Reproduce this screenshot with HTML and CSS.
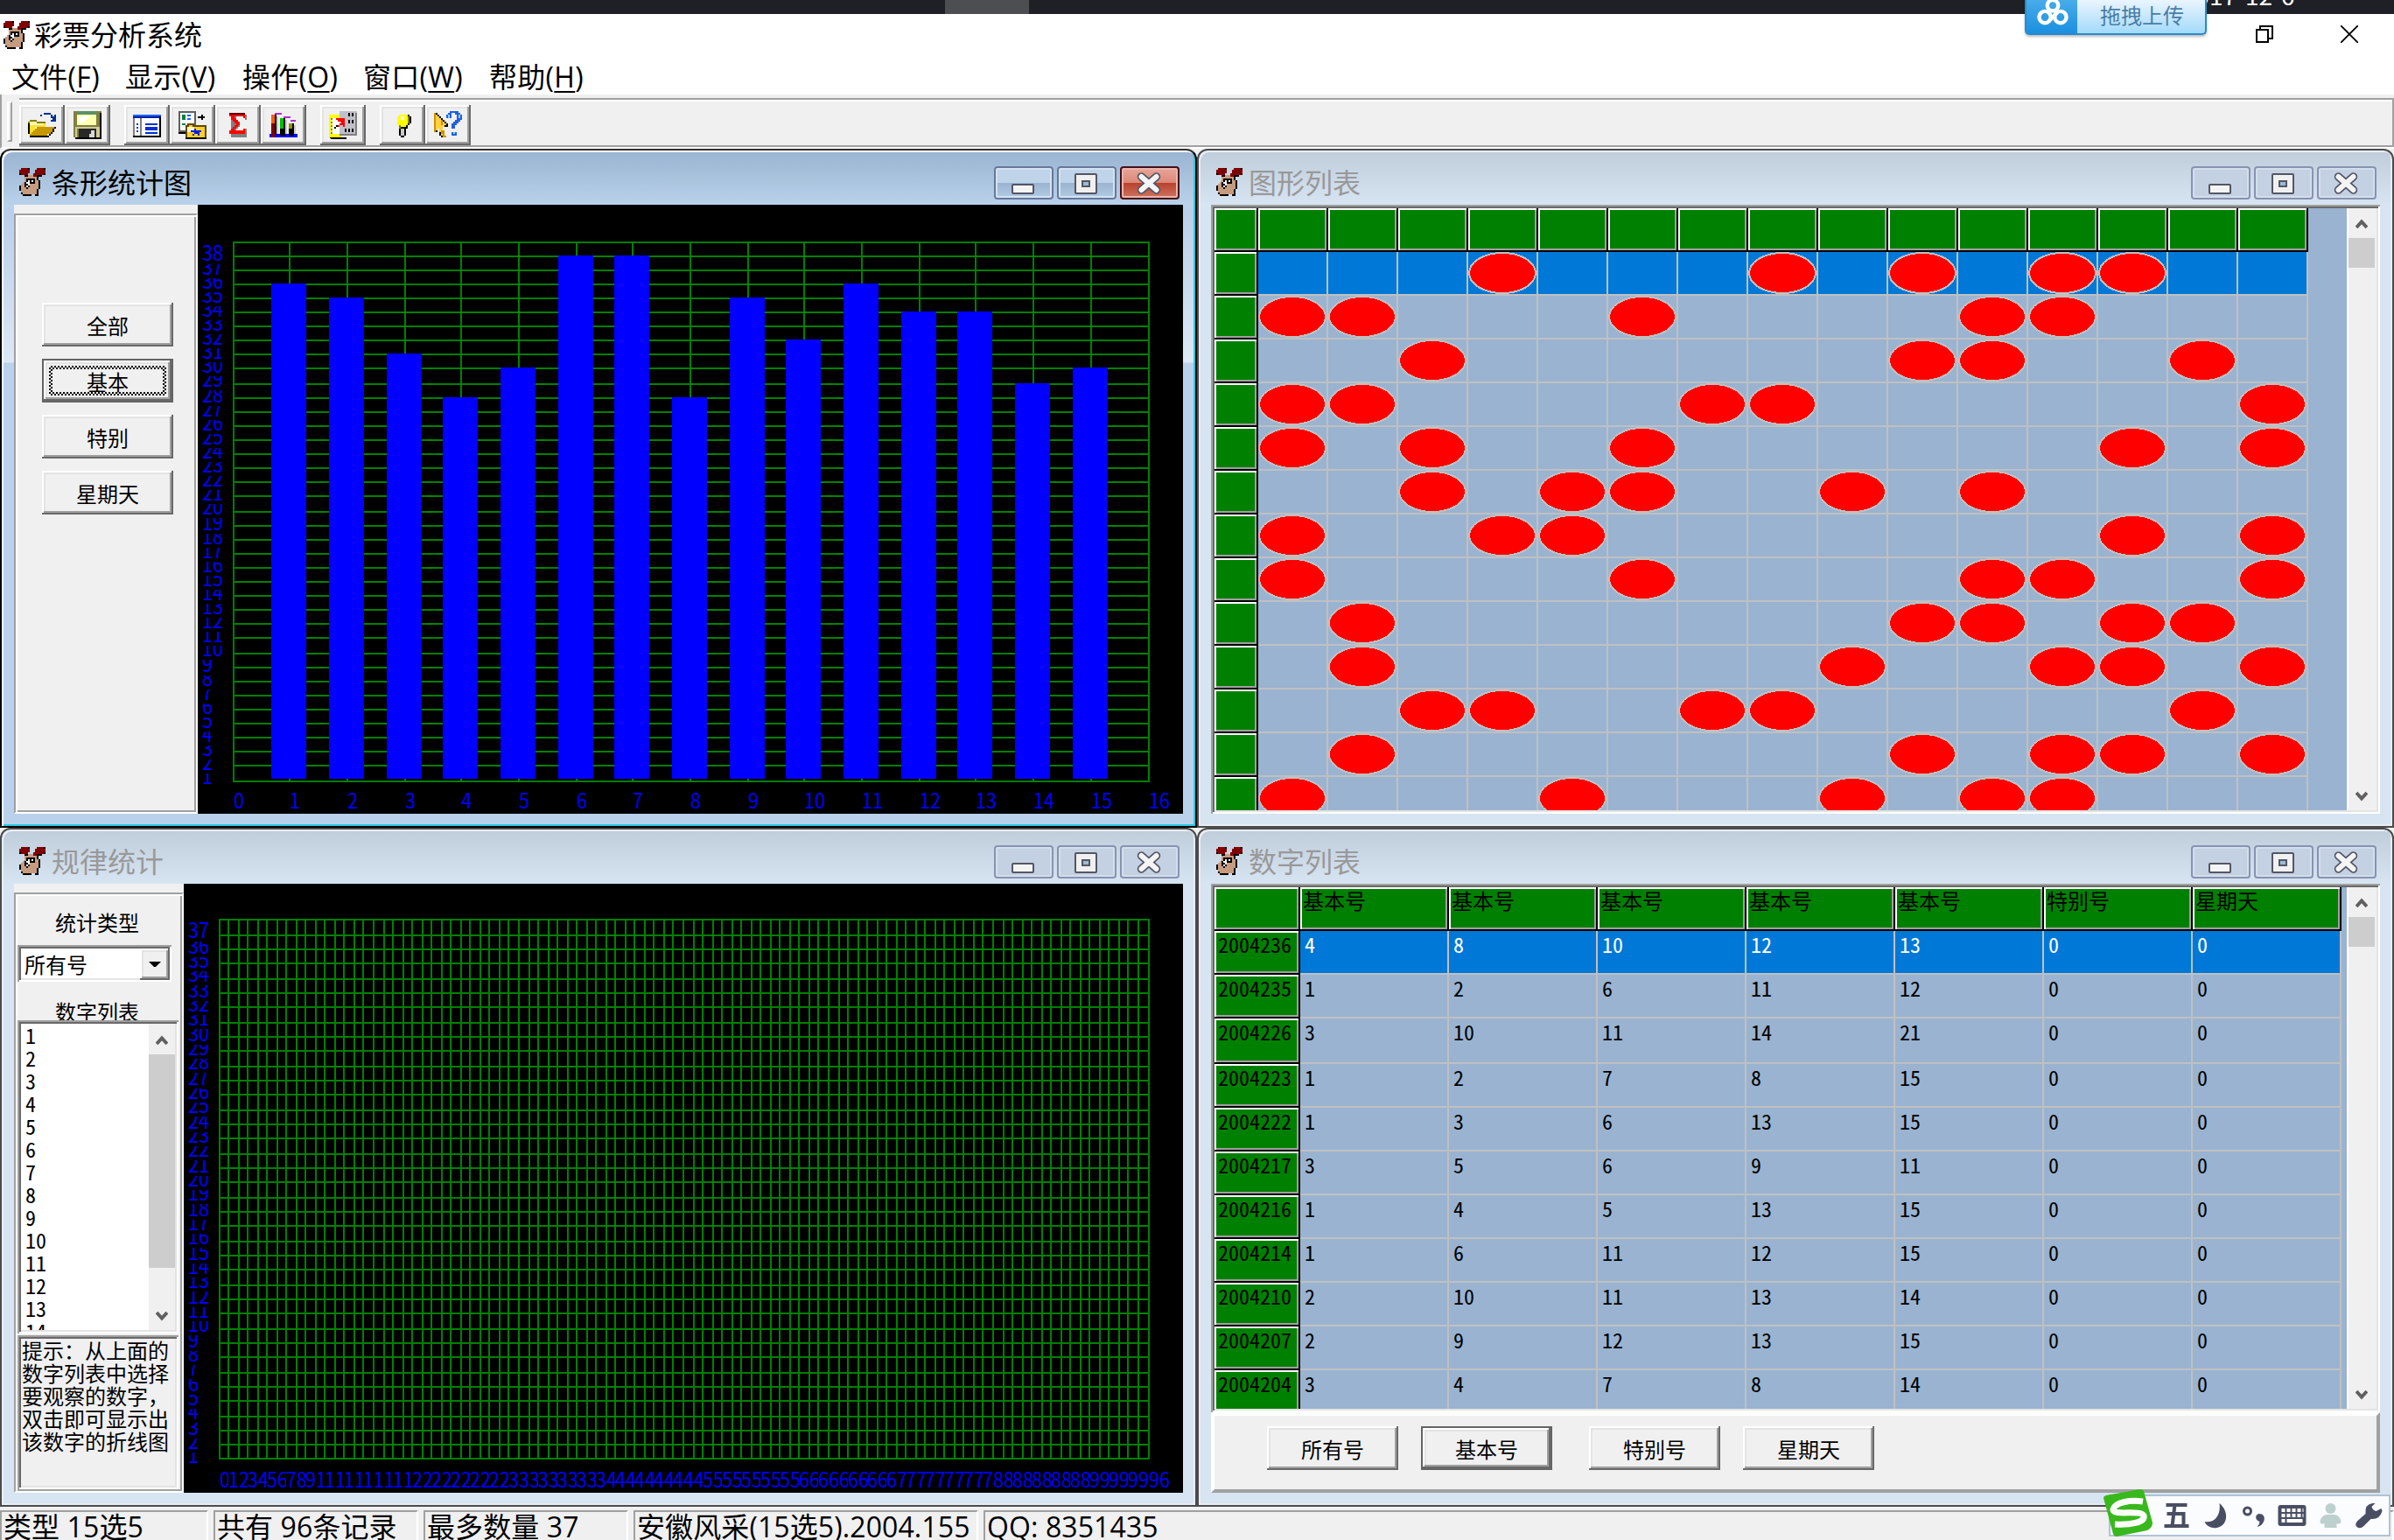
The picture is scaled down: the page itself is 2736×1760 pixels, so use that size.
FILE: index.html
```html
<!DOCTYPE html>
<html lang="zh-CN">
<head>
<meta charset="utf-8">
<title>彩票分析系统</title>
<link rel="stylesheet" href="styles.css">
</head>
<body>
<svg class="defs" width="0" height="0">
  <symbol id="moose" viewBox="0 0 15 16">
    <path fill="#c69c80" d="M3 4h6v1h1v2h1v5h-1v3H2v-1H1V9h1V8h1z"/>
    <path fill="#800000" d="M1 0h4v1h1v2H5v1H0V1h1zM10 0h4v1h1v2h-1v1h-4v1H8V3h1V1h1z"/>
    <path fill="#000" d="M5 0h1v1H5zM0 3h1v1H0zM14 0h1v1h-1zM14 3h1v1h-1zM3 4h2v1H3zM10 4h3v1h-3zM10 5h1v2h-1zM11 7h1v5h-1zM10 12h1v4h-1zM2 15h5v1H2zM9 15h1v1H9zM1 14h1v1H1zM0 10h1v3H0zM4 6h5v1H4zM8 7h1v2H8zM4 7h1v1H4zM6 8h2v1H6zM3 8h1v3H3zM4 11h1v1H4zM5 10h1v1H5z"/>
    <path fill="#fff" d="M5 7h3v1H5zM4 8h2v2H4zM4 10h1v1H4z"/>
    <path fill="#000" d="M6 7h1v1H6zM4 9h1v1H4z"/>
  </symbol>
  <symbol id="g-min" viewBox="0 0 68 38"><rect x="21" y="21" width="24" height="10" rx="1" fill="#f4f4f4" stroke="#535666" stroke-width="2"/></symbol>
  <symbol id="g-max" viewBox="0 0 68 38"><rect x="21" y="9" width="24" height="22" rx="1" fill="#f0f0f0" stroke="#535666" stroke-width="2"/><rect x="29" y="17" width="8" height="6" fill="#9fb9d3" stroke="#535666" stroke-width="2"/></symbol>
  <symbol id="g-close" viewBox="0 0 68 38"><path d="M24.500 12L41.500 27M41.500 12L24.500 27" stroke="#535666" stroke-width="9.500" stroke-linecap="round"/><path d="M24.500 12L41.500 27M41.500 12L24.500 27" stroke="#f4f4f4" stroke-width="6" stroke-linecap="round"/></symbol>
  <symbol id="up" viewBox="0 0 14 12"><path d="M1 10L7 3.500L13 10" fill="none" stroke="#606060" stroke-width="4"/></symbol>
  <symbol id="down" viewBox="0 0 14 12"><path d="M1 2L7 8.500L13 2" fill="none" stroke="#606060" stroke-width="4"/></symbol>
</svg>

<div class="behind"><i class="behind-tab"></i><span class="behind-date">2017-12-6</span></div>

<header class="titlebar">
  <svg class="moose"><use href="#moose"/></svg>
  <h1>彩票分析系统</h1>
  <svg class="sys restore" viewBox="0 0 20 20"><path d="M1 5h13v14H1zM5 5V1h14v14h-5" fill="none" stroke="#000" stroke-width="2"/></svg>
  <svg class="sys close" viewBox="0 0 20 20"><path d="M0 0L20 20M20 0L0 20" stroke="#000" stroke-width="1.800"/></svg>
</header>
<nav class="menu">
  <span>文件(<u>F</u>)</span><span>显示(<u>V</u>)</span><span>操作(<u>O</u>)</span><span>窗口(<u>W</u>)</span><span>帮助(<u>H</u>)</span>
</nav>

<div class="toolbar">
  <i class="grip"></i>
  <div class="tools">
    <button class="tool"><svg viewBox="0 0 16 16"><path fill="#003090" d="M9 1h4v1H9zM7 2h1v1H7zM13 2h1v1h1V2h1v4h-3V5h1V4h-1z"/><path fill="#808000" d="M0 6h1V5h4v1h5v3H0z"/><path fill="#ffe030" d="M1 7h9v2H4v3H3v1H1z"/><path fill="#fff8b0" d="M1 6h4v1h4v1H1z"/><path fill="#c89800" d="M5 9h10v1h-1v2h-1v1h-2v1H1v-1h1v-1h1v-1h1v-1h1z"/><path fill="#000" d="M0 7h1v6H0zM1 14h11v1H1zM15 9h1v1h-1zM14 10h1v2h-1zM13 12h1v1h-1zM12 13h1v1h-1z"/></svg></button>
    <button class="tool"><svg viewBox="0 0 16 16"><path fill="#808040" d="M0 0h16v16H1v-1H0z"/><path fill="#5a9068" d="M2 0h11v2H2z"/><path fill="#ffffb0" d="M2 2h11v6H2z"/><path fill="#fff" d="M3 3h6v1H8v1H7v1H5v1H3z"/><path fill="#d0cc98" d="M1 9h14v1H1zM1 10h1v5H1zM13 10h2v5h-2z"/><path fill="#282828" d="M3 10h10v5H3z"/><path fill="#d8d8d8" d="M10 11h2v4H9v-2h1z"/><path fill="#000" d="M15 1h1v15H1v-1h14z"/></svg></button>
    <i class="gap"></i>
    <button class="tool"><svg viewBox="0 0 16 16"><path fill="#808080" d="M0 2h1v13H0zM4 4h1v11H4z"/><path fill="#fff" d="M1 4h3v10H1zM5 4h10v10H5z"/><path fill="#2060ff" d="M0 2h16v1H0z"/><path fill="#0020a0" d="M0 3h16v1H0z"/><path fill="#0030d0" d="M2 7h1v1H2zM2 9h1v1H2zM2 11h1v1H2zM7 7h7v1H7zM7 9h7v2H7zM7 12h7v1H7z"/><path fill="#000" d="M15 3h1v12H0v-1h15z"/></svg></button>
    <button class="tool"><svg viewBox="0 0 16 16"><path fill="#fff" stroke="#606060" d="M.5.500h9v11h-9z"/><path fill="#008040" d="M2 2h2v3H2zM2 7h2v1H2z"/><path fill="#2060ff" d="M5 2h2v1H5zM5 4h2v1H5z"/><path fill="#000" d="M13 2h1v3h-1zM11 3h4v1h-4zM0 12h4v1H0z"/><path fill="#ffd028" stroke="#604800" d="M4.500 8.500h1v-1h3v1h7v7h-11z"/><path fill="#fff8c0" d="M5 9h4v3H5z"/><path fill="#0020e0" d="M9 10h1v1h3v1h-1v2h-1v-1h-2v1H8v-1h1v-1H7v-1h2z"/><path d="M4 15h12v1H4z"/></svg></button>
    <button class="tool"><svg viewBox="0 0 16 16"><path fill="#808080" d="M4 2h9v3h-1V3H7v2h1v1h1v3H8v1H7v2h4v-2h2v5H4z"/><path fill="#f00" d="M3 1h9v3h-1V3H6v1h1v1h1v1h1v2H8v1H7v1H6v1h5v-1h1v3H3v-2h1v-1h1V9h1V8h1V7H6V6H5V5H4V3H3z"/><path fill="#600000" d="M3 1h9v1H3z"/></svg></button>
    <button class="tool"><svg viewBox="0 0 16 16"><path fill="#ff6000" d="M1 2h2v5H1z"/><path fill="#800000" d="M1 7h2v7H1z"/><path fill="#00c000" d="M6 4h2v6H6z"/><path fill="#909000" d="M11 7h2v3h-2z"/><path fill="#000" d="M3 2h1v11H3zM6 10h3v3H6zM8 4h1v6H8zM11 10h3v3h-3zM13 7h1v3h-1z"/><path fill="#b030d0" d="M3 1h4v1H3zM8 3h4v1H8zM12 5h3v1h-3z"/><path fill="#ccc" d="M4 3h1v10H4zM9 5h1v8H9zM14 8h1v5h-1z"/><path fill="#00f" d="M0 13h16v2H0z"/><path fill="#800000" d="M1 13h2v2H1z"/><path d="M6 13h3v1H6zM11 13h3v1h-3z"/></svg></button>
    <i class="gap"></i>
    <button class="tool"><svg viewBox="0 0 16 16"><path fill="#ffff00" d="M0 2h7v13H0z"/><path fill="#808080" d="M1 4h1v1H1zM1 6h1v1H1zM1 8h1v1H1zM1 10h1v1H1zM1 12h1v1H1z"/><path fill="#fff" d="M2 4h4v9H2z"/><path fill="#c0c0c8" d="M6 0h10v13H6z"/><path fill="#808080" d="M15 1h1v13H6v-1h9z"/><path d="M11 1h1v2h-1zM13 1h1v2h-1zM11 5h1v2h-1zM13 5h1v2h-1zM9 10h1v2H9zM11 10h1v2h-1zM13 10h1v2h-1zM0 15h10v1H1zM3 9h1V8h1v1H4v1H3z"/><path fill="#f00" d="M4 4h5v5H8V8H6v1H5V8h1V7h1V6H5V5H4z"/></svg></button>
    <i class="gap"></i>
    <button class="tool"><svg viewBox="0 0 16 16"><path fill="#808000" d="M6 2h5v1h1v5h-1v2H6V8H5V3h1z"/><path fill="#ff0" d="M5 3h1V2h5v6h-1v2H7V8H5z"/><path fill="#fff" d="M7 3h2v2H7z"/><path fill="#b0b0b0" d="M7 10h2v4H7z"/><path d="M11 2h1v1h1v4h-1v1h-1v2h-1v4H9v1H7v-1H6v-4h1v-1h3V8h1V7h1V3h-1z"/><path fill="#c8c8c8" d="M7 10h2v4H7z"/></svg></button>
    <button class="tool"><svg viewBox="0 0 16 16"><path fill="#ffd040" d="M0 1h1v1h1v1h1v1h1v1h1v1h1v1h2v2H5v2h1v3H4v-2H3v-2H2v1H1v1H0z"/><path fill="#d09000" d="M0 1h1v11H0zM4 5h1v3H4zM5 11h1v3h1v1H5v-2H4v-2z"/><path fill="#000" d="M1 1h1v1H1zM2 2h1v1H2zM3 3h1v1H3zM4 4h1v1H4zM5 5h1v1H5zM6 6h1v1H6zM7 7h1v2H6V8h1zM1 11h1v1H1zM3 12h1v2H3zM4 14h1v1H4z"/><path fill="#2060e0" d="M9 0h5v1h1v1h1v3h-1v1h-1v1h-1v1h-1v2h-2V7h1V6h1V5h1V2h-1V1h-2v3H7V2h1V1h1zM10 12h3v2h-3z"/><path fill="#90d0ff" d="M8 2h1v2H8zM14 2h1v2h-1zM11 12h1v1h-1z"/></svg></button>
  </div>
</div>

<main class="mdi">
  <section class="win active">
    <div class="caption"><svg class="moose"><use href="#moose"/></svg><h2>条形统计图</h2><div class="capbtns"><svg><use href="#g-min"/></svg><svg><use href="#g-max"/></svg><svg class="x"><use href="#g-close"/></svg></div></div>
    <div class="client row">
      <div class="side bars-side">
        <div class="etched stack">
          <button class="btn">全部</button>
          <button class="btn default"><span class="focus"><span>基本</span></span></button>
          <button class="btn">特别</button>
          <button class="btn">星期天</button>
        </div>
      </div>
      <svg id="bars" class="plot" width="1126" height="696"></svg>
    </div>
  </section>

  <section class="win">
    <div class="caption"><svg class="moose"><use href="#moose"/></svg><h2>图形列表</h2><div class="capbtns"><svg><use href="#g-min"/></svg><svg><use href="#g-max"/></svg><svg><use href="#g-close"/></svg></div></div>
    <div class="client">
      <div class="gridbox full">
        <div class="gridview" id="balls"></div>
        <div class="scroll"><svg><use href="#up"/></svg><i></i><svg><use href="#down"/></svg></div>
      </div>
    </div>
  </section>

  <section class="win">
    <div class="caption"><svg class="moose"><use href="#moose"/></svg><h2>规律统计</h2><div class="capbtns"><svg><use href="#g-min"/></svg><svg><use href="#g-max"/></svg><svg><use href="#g-close"/></svg></div></div>
    <div class="client row">
      <div class="side rule-side">
        <div class="etched rule">
          <div class="lbl">统计类型</div>
          <div class="combo"><span>所有号</span><b><svg viewBox="0 0 14 8"><path d="M0 1h14L8 7H6z"/></svg></b></div>
          <div class="lbl second">数字列表</div>
          <div class="list">
            <ul><li>1</li><li>2</li><li>3</li><li>4</li><li>5</li><li>6</li><li>7</li><li>8</li><li>9</li><li>10</li><li>11</li><li>12</li><li>13</li><li>14</li></ul>
            <div class="scroll listscroll"><svg><use href="#up"/></svg><i></i><svg><use href="#down"/></svg></div>
          </div>
          <div class="tip">提示：从上面的<br>数字列表中选择<br>要观察的数字，<br>双击即可显示出<br>该数字的折线图</div>
        </div>
      </div>
      <svg id="rule" class="plot" width="1142" height="696"></svg>
    </div>
  </section>

  <section class="win">
    <div class="caption"><svg class="moose"><use href="#moose"/></svg><h2>数字列表</h2><div class="capbtns"><svg><use href="#g-min"/></svg><svg><use href="#g-max"/></svg><svg><use href="#g-close"/></svg></div></div>
    <div class="client">
      <div class="gridbox part">
        <div class="gridview" id="nums"></div>
        <div class="scroll"><svg><use href="#up"/></svg><i></i><svg><use href="#down"/></svg></div>
      </div>
      <div class="panel"><button class="btn">所有号</button><button class="btn default">基本号</button><button class="btn">特别号</button><button class="btn">星期天</button></div>
    </div>
  </section>
</main>

<footer class="status"><span>类型 15选5</span><span>共有 96条记录</span><span>最多数量 37</span><span>安徽风采(15选5).2004.155</span><span>QQ: 8351435</span></footer>

<div class="upload">
  <div class="upload-logo"><svg viewBox="0 0 40 36" fill="none" stroke="#fff" stroke-width="5"><circle cx="20" cy="7" r="7"/><circle cx="10" cy="22" r="7.500"/><circle cx="30" cy="22" r="7.500"/><path d="M15 27L26 16"/></svg></div>
  <div class="upload-text">拖拽上传</div>
</div>

<div class="ime">
  <svg class="ime-s" viewBox="0 0 56 54"><path fill="#38b81c" d="M0 10Q0 8 3 7L42 0Q45 0 46 2L56 38Q56 44 50 47L15 54Q12 54 11 51Z"/><path fill="none" stroke="#fff" stroke-width="7" d="M45 14C30 12 13 15 11 23C10 31 42 23 46 30C48 38 30 41 13 40"/></svg>
  <svg class="ime-row" viewBox="0 0 256 44">
    <g fill="none" stroke="#494e63" stroke-width="4"><path d="M4 10h24M14 10L11 34M5 20h19v14M2 34h28"/></g>
    <path fill="#494e63" d="M65 8C77 18 74 34 62 36C56 37 50 34 48 29C59 31 67 22 65 8z"/>
    <circle cx="97" cy="17" r="4" fill="none" stroke="#494e63" stroke-width="3"/><path fill="#494e63" d="M110 20c6 0 8 5 5 10q-2 4-7 5q3-3 3-6c-5-1-6-8-1-9z"/>
    <rect x="132" y="10" width="32" height="24" rx="3" fill="#494e63"/><path stroke="#fff" stroke-width="4" stroke-dasharray="4 2" d="M136 16h25M136 22h25"/><path stroke="#fff" stroke-width="4" d="M136 28h4M142 28h18"/>
    <circle cx="192" cy="14" r="6" fill="#bcd0ce"/><path fill="#bcd0ce" d="M180 30c0-6 5-9 8-9h8c3 0 8 3 8 9q-3 3-5 1v5h-14v-5q-3 2-5-1z"/>
    <path fill="#494e63" d="M240 8q-9 1-8 12l-9 8q-4 4-1 7q4 3 8-1l8-8q10 1 13-9l-1-3l-6 3q-4-1-5-5l4-4z"/>
  </svg>
</div>
<script src="app.js"></script>
</body>
</html>
```
FILE: styles.css
```css
* { box-sizing: border-box; margin: 0; padding: 0; }
body {
  width: 2736px; height: 1760px; overflow: hidden; position: relative;
  display: flex; flex-direction: column;
  background: #f0f0f0; color: #000;
  font: 24px "Noto Sans CJK SC", sans-serif;
}
svg { display: block; flex: none; }
button { font: inherit; border: 0; background: #f0f0f0; flex: none; }
.defs { position: absolute; }
.moose { width: 30px; height: 32px; shape-rendering: crispEdges; }

.behind { height: 16px; flex: none; background: #1f2025; overflow: hidden; display: flex; }
.behind-tab { width: 96px; margin-left: 1080px; background: #4d4e52; }
.behind-date { margin-left: 1318px; color: #fff; font-size: 28px; line-height: 30px; height: 30px; margin-top: -21px; }

.titlebar { height: 50px; flex: none; background: #fff; display: flex; align-items: flex-start; padding: 8px 0 0 4px; }
.titlebar h1 { flex: 1; }
h1, h2 { font-weight: 400; font-size: 32px; line-height: 34px; white-space: nowrap; }
.titlebar h1 { margin-left: 5px; margin-top: -3px; }
.sys { width: 20px; height: 20px; margin-top: 5px; }
.restore { margin-right: 77px; }
.close { margin-right: 41px; }
.menu { height: 42px; flex: none; background: #fff; display: grid; grid-template-columns: 130px 134px 138px 144px 200px; padding-left: 13px; font: 32px/44px "Open Sans", "Noto Sans CJK SC", sans-serif; white-space: nowrap; letter-spacing: .3px; }
.menu u { text-decoration-thickness: 2px; text-underline-offset: 4px; }

.toolbar { height: 62px; flex: none; display: flex; padding-top: 4px; border-left: 2px solid #a0a0a0; border-bottom: 2px solid #fff; }
.grip { width: 6px; height: 46px; margin: 4px 8px 0 6px; border: 2px solid #fff; border-right-color: #a0a0a0; border-bottom-color: #a0a0a0; }
.tools { flex: 1; height: 56px; display: flex; padding-top: 6px; border-top: 2px solid #a0a0a0; border-bottom: 2px solid #a0a0a0; border-right: 2px solid #a0a0a0; box-shadow: inset 0 2px #fff; }
.tool { width: 52px; height: 46px; padding: 6px 10px; }
.tool svg { width: 32px; height: 32px; shape-rendering: crispEdges; }
.gap { width: 16px; }

.tool, .btn, .combo b { box-shadow: inset -2px -2px #696969, inset 2px 2px #fff, inset -4px -4px #a0a0a0, inset 4px 4px #e3e3e3; }
.btn { width: 150px; height: 50px; line-height: 51px; text-align: center; }
.btn.default { border: 2px solid #646464; line-height: 47px; }
.focus { display: block; height: 34px; margin: 6px; padding: 4px; background: repeating-conic-gradient(#000 0 25%, #f0f0f0 0 50%) 0 0 / 4px 4px; }
.focus span { display: block; height: 26px; line-height: 28px; background: #f0f0f0; }

.mdi { flex: none; display: grid; grid-template-columns: 1368px 1368px; grid-template-rows: 776px 776px; }
.win {
  border: 2px solid #4b4b4b; border-radius: 12px 12px 0 0; padding: 0 14px 14px;
  background: linear-gradient(#bfcddb, #d7e4f2 62px, #d7e4f2);
  box-shadow: inset 2px 2px #e8edf5, inset -2px -2px #e8edf5;
}
.win.active {
  border-color: #000; border-top-color: #303030;
  background: linear-gradient(#99b4d1, #b9d1ea 62px, #b9cfea 70px, #dce8f5 242px, #b9d1ea 243px);
  box-shadow: inset 2px 2px #fff, inset -2px -2px #29cbe0;
}
.caption { height: 62px; display: flex; align-items: flex-start; padding: 20px 4px 0 6px; }
.caption h2 { flex: 1; margin: -2px 0 0 7px; color: #999; }
.active h2 { color: #000; }
.capbtns { display: flex; gap: 4px; margin-top: -2px; }
.capbtns svg { width: 68px; height: 38px; border-radius: 4px; background: #c4d1e2; box-shadow: inset 0 0 0 2px #8893b1, inset 0 0 0 4px #d3deec; }
.active .capbtns svg { background: linear-gradient(#bfd3e9 50%, #9ab4d0 50%, #b5cde5); box-shadow: inset 0 0 0 2px #66789b, inset 0 0 0 4px #d4e2f1; }
.active .capbtns .x { background: linear-gradient(#e8a89c, #dc8878 50%, #b8412c 50%, #d07a66); box-shadow: inset 0 0 0 2px #43101c, inset 0 0 0 4px #eab5aa; }

.client { height: 696px; width: 1336px; background: #f0f0f0; overflow: hidden; }
.row { display: flex; }
.plot { background: #000; }
.plot path, .plot rect { shape-rendering: crispEdges; }
.plot text { font: 24px "Noto Sans CJK SC", sans-serif; fill: #00f; }
.side { padding-top: 10px; }
.bars-side { width: 210px; }
.rule-side { width: 194px; }
.etched { height: 686px; border: 2px solid #a0a0a0; border-right-color: #fff; border-bottom-color: #fff; box-shadow: inset 2px 2px #fff, inset -2px -2px #a0a0a0; }
.stack { padding: 100px 0 0 30px; display: flex; flex-direction: column; gap: 14px; }
.rule { padding: 16px 2px 0; }
.lbl { height: 42px; line-height: 32px; text-align: center; padding-right: 4px; }
.lbl.second { height: 44px; line-height: 67px; overflow: hidden; }
.combo { width: 176px; height: 42px; background: #fff; display: flex; justify-content: space-between; padding: 4px 2px 2px 8px; line-height: 36px; }
.combo, .list, .tip { box-shadow: inset 2px 2px #a0a0a0, inset -2px -2px #fff, inset 4px 4px #696969, inset -4px -4px #e3e3e3; }
.combo b { width: 34px; background: #f0f0f0; padding: 14px 10px; }
.combo b svg { width: 14px; height: 8px; }
.list { width: 184px; height: 358px; background: #fff; padding: 4px; display: flex; overflow: hidden; }
.list ul { list-style: none; flex: 1; line-height: 26px; padding: 0 0 0 5px; height: 350px; overflow: hidden; }
.list li, .num { font-feature-settings: "hwid"; }
.tip { width: 184px; height: 176px; margin-top: 2px; padding: 4px 0 0 5px; line-height: 26px; white-space: nowrap; }

.gridbox { display: flex; background: #99b3d1; padding: 4px; box-shadow: inset 2px 2px #a0a0a0, inset -2px -2px #fff, inset 4px 4px #696969, inset -4px -4px #e3e3e3; }
.full { height: 696px; }
.part { height: 604px; }
.gridview { flex: 1; overflow: hidden; }
.scroll { width: 34px; background: #f0f0f0; border-left: 2px solid #fff; display: flex; flex-direction: column; align-items: center; padding: 12px 2px 10px 0; }
.scroll svg { width: 14px; height: 12px; }
.scroll i { width: 30px; height: 34px; background: #cdcdcd; margin: 10px 0 auto; }
.scroll.listscroll { border: 0; width: 30px; padding: 13px 0 10px 0; }
.scroll.listscroll i { height: 244px; }

.gr { display: flex; height: 50px; }
.gr.tall { height: 52px; }
.gr > * { flex: none; width: 80px; border-right: 2px solid #c0c0c0; border-bottom: 2px solid #c0c0c0; line-height: 30px; white-space: nowrap; }
.gr .fix { background: #008000; border-color: #000; box-shadow: inset 2px 2px #fff, inset -2px -2px #a0a0a0; }
.gr .fix:first-child { width: 50px; }
.gr.sel > :not(.fix) { background: #0078d7; color: #fff; }
.nums .gr > * { width: 170px; padding-left: 5px; }
.nums .gr .fix { padding-left: 3px; }
.nums .gr .fix:first-child { width: 98px; padding-left: 4px; }
.ball { width: 78px; height: 48px; shape-rendering: crispEdges; }

.panel { height: 92px; border: 4px solid #fff; border-right-color: #a0a0a0; border-bottom-color: #a0a0a0; display: grid; grid-template-columns: 176px 192px 176px 150px; padding: 12px 0 0 60px; }

.status { height: 38px; flex: none; overflow: hidden; padding-top: 4px; display: grid; grid-template-columns: 238px 234px 234px 394px 1fr; gap: 6px; font: 32px/34px "Open Sans", "Noto Sans CJK SC", sans-serif; white-space: nowrap; }
.status span { border-top: 2px solid #a0a0a0; border-left: 2px solid #a0a0a0; border-right: 2px solid #fff; padding-left: 2px; letter-spacing: .1px; }

.upload { position: absolute; left: 2314px; top: 0; width: 208px; height: 40px; display: flex; border: 2px solid #2a8acb; border-top: 0; border-radius: 0 0 5px 5px; background: linear-gradient(#eaf5fe, #a2dafa); box-shadow: 0 2px 3px #0004; }
.upload-logo { width: 58px; background: linear-gradient(#48acea, #1a8fe0); padding-left: 10px; }
.upload-logo svg { width: 40px; height: 32px; }
.upload-text { padding-left: 26px; line-height: 34px; color: #4a7ea8; }

.ime { position: absolute; left: 2404px; top: 1702px; width: 328px; height: 56px; }
.ime-s { position: absolute; left: 0; top: 0; width: 56px; height: 54px; }
.ime-row { width: 322px; height: 48px; margin: 6px 0 0 6px; padding-left: 57px; background: #fafcfe; border: 2px solid #b0c3d5; }
```
FILE: app.js
```js
const EPS = 1e-6;
const label = (text, x, base) => {
  const w = 12 * String(text).length;
  return `<rect x="${x}" y="${base - 20}" width="${w}" height="24" fill="#000"/>` +
    `<text x="${x}" y="${base}" textLength="${w}" lengthAdjust="spacingAndGlyphs">${text}</text>`;
};

// Draws axes, grid and labels; every coordinate sits on a 2px device unit.
function grid(o) {
  const yAt = j => o.bottom - 2 * Math.floor(j * o.stepY + (o.nudge || 0));
  const xAt = k => o.left + 2 * Math.floor(k * o.stepX + EPS);
  let d = '', out = '';
  for (let j = 0; j <= o.rows; j++) d += `M${o.left} ${yAt(j) + 1}H${o.right + 2}`;
  for (let k = 0; k <= o.cols; k++) d += `M${xAt(k) + 1} ${yAt(o.rows)}V${o.bottom + 2}`;
  out += `<path d="${d}" stroke="#008000" stroke-width="2"/>`;
  for (let j = 1; j <= o.rows; j++) out += label(j, o.labelX, yAt(j) + 22);
  for (let k = 0; k <= o.cols; k++) out += label(k, xAt(k) + 1, o.bottom + 34);
  (o.values || []).forEach((v, i) => {
    out += `<rect x="${xAt(i + 1) - 20}" y="${yAt(v)}" width="40" height="${o.bottom - yAt(v)}" fill="#00f"/>`;
  });
  return out;
}

document.getElementById('bars').innerHTML = grid({
  left: 40, right: 1086, bottom: 656, rows: 38, cols: 16,
  stepX: 523 / 16, stepY: 308 / 38, nudge: -EPS, labelX: 5,
  values: [35, 34, 30, 27, 29, 37, 37, 27, 34, 31, 35, 33, 33, 28, 29]
});
document.getElementById('rule').innerHTML = grid({
  left: 40, right: 1102, bottom: 656, rows: 37, cols: 96,
  stepX: 531 / 96, stepY: 308 / 37, nudge: EPS, labelX: 5
});

const draws = [[3,7,9,11,12],[0,1,5,10,11],[2,9,10,13],[0,1,6,7,14],[0,2,5,12,14],[2,4,5,8,10],[0,3,4,12,14],
  [0,5,10,11,14],[1,9,10,12,13],[1,8,11,12,14],[2,3,6,7,13],[1,9,11,12,14],[0,4,8,10,11]];
const ball = '<svg class="ball"><ellipse cx="39" cy="24" rx="38" ry="23" fill="#f00" stroke="#c0c0c0" stroke-width="2"/></svg>';
document.getElementById('balls').innerHTML =
  '<div class="gr">' + '<div class="fix"></div>'.repeat(16) + '</div>' +
  draws.map((r, i) => `<div class="gr${i ? '' : ' sel'}"><div class="fix"></div>` +
    Array.from({ length: 15 }, (_, c) => `<div>${r.includes(c) ? ball : ''}</div>`).join('') + '</div>').join('');

const records = [[2004236,4,8,10,12,13],[2004235,1,2,6,11,12],[2004226,3,10,11,14,21],[2004223,1,2,7,8,15],
  [2004222,1,3,6,13,15],[2004217,3,5,6,9,11],[2004216,1,4,5,13,15],[2004214,1,6,11,12,15],
  [2004210,2,10,11,13,14],[2004207,2,9,12,13,15],[2004204,3,4,7,8,14]];
const nums = document.getElementById('nums');
nums.classList.add('nums');
nums.innerHTML =
  '<div class="gr">' + ['', '基本号', '基本号', '基本号', '基本号', '基本号', '特别号', '星期天'].map(t => `<div class="fix">${t}</div>`).join('') + '</div>' +
  records.map((r, i) => `<div class="gr${i === 0 ? ' sel' : i === 2 ? ' tall' : ''}">` +
    [...r, 0, 0].map((v, c) => `<div class="num${c ? '' : ' fix'}">${v}</div>`).join('') + '</div>').join('');
```
